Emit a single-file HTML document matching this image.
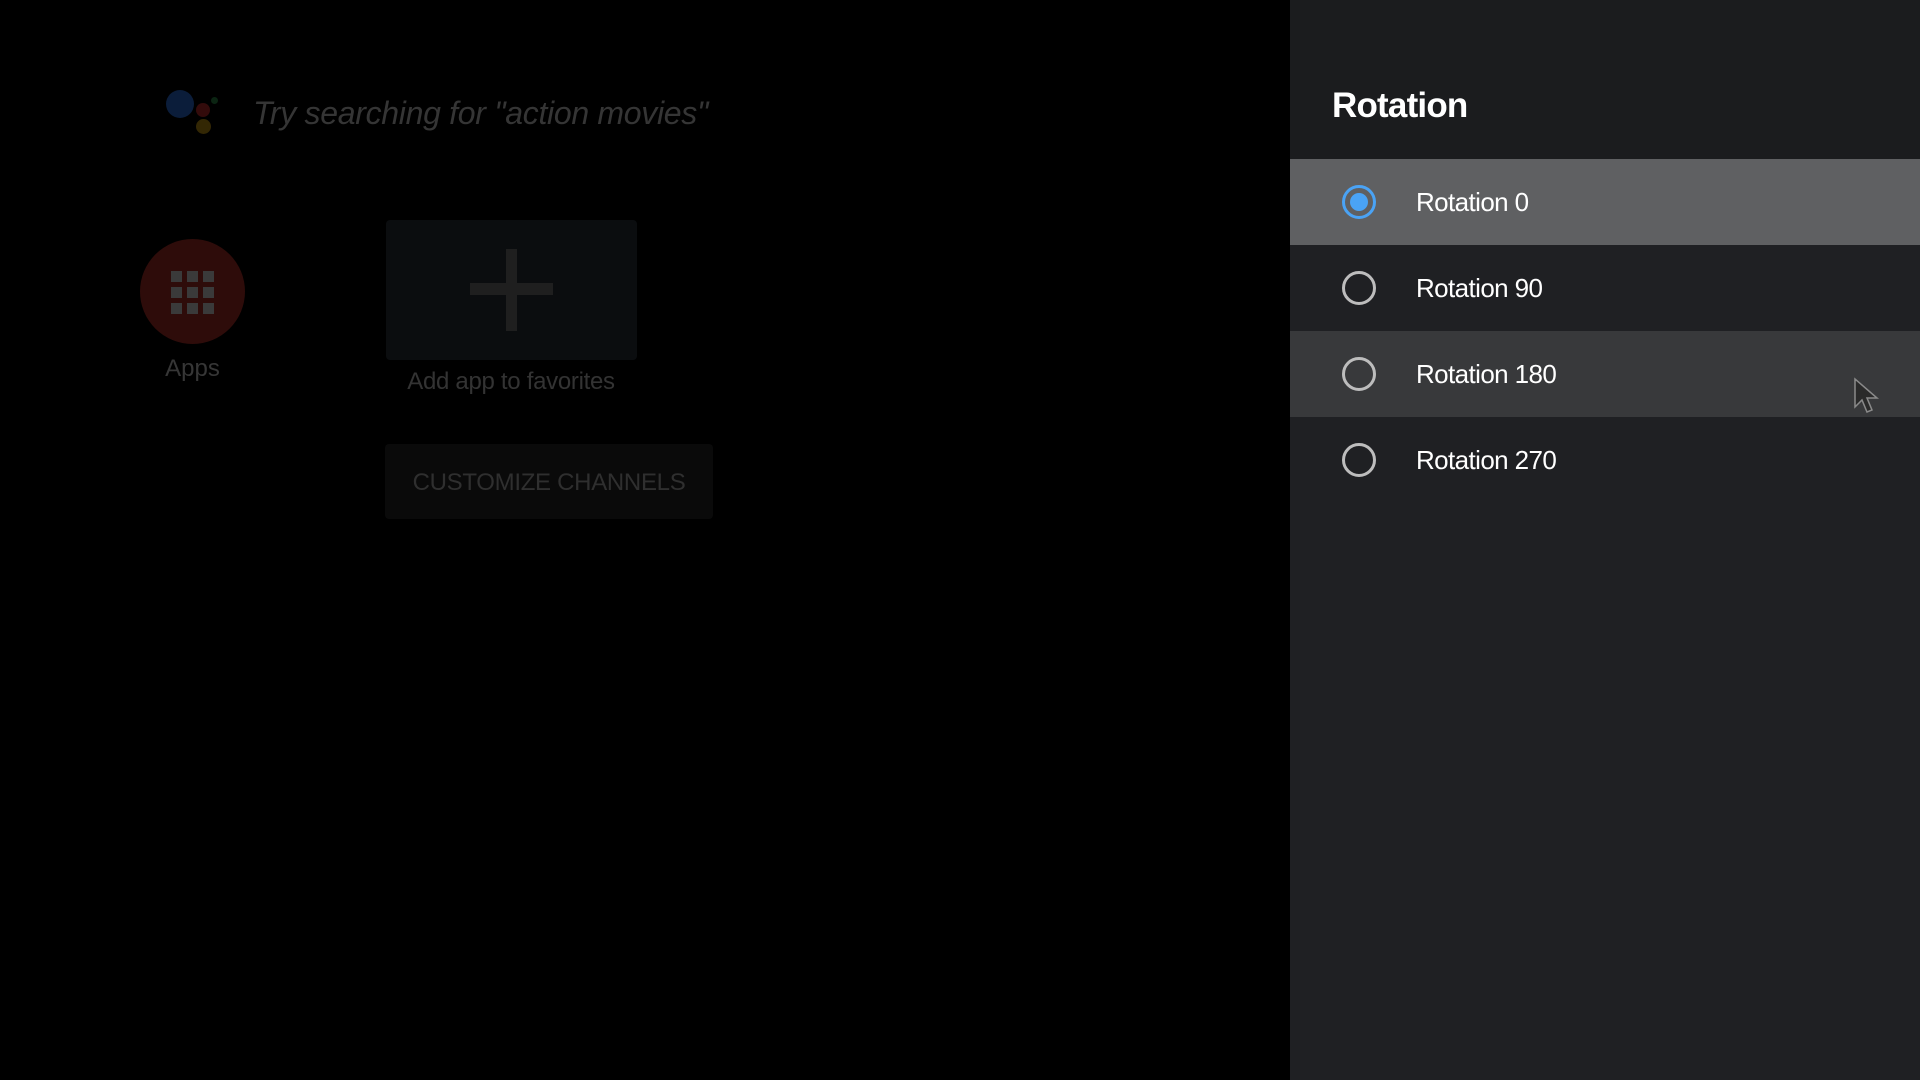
<!DOCTYPE html>
<html><head><meta charset="utf-8"><style>
*{margin:0;padding:0;box-sizing:border-box}
body{width:1920px;height:1080px;background:#000;position:relative;overflow:hidden;font-family:"Liberation Sans",sans-serif}
.a{position:absolute}
.panel{left:1290px;top:0;width:630px;height:1080px;background:#1f2023}
.hdr{left:0;top:0;width:630px;height:159px;background:#1b1c1e}
.title{left:42px;top:86px;color:#fff;font-size:35px;font-weight:bold;letter-spacing:-0.8px}
.row{left:0;width:630px;height:86px}
.rad{left:52px;top:26px;width:34px;height:34px;border-radius:50%;border:3px solid #bdbdbd}
.lbl{left:126px;top:28px;color:#fff;font-size:26px;letter-spacing:-0.6px}
.dot{border-radius:50%}
</style></head><body>
<div class="a dot" style="left:166px;top:90px;width:28px;height:28px;background:#0b1d3a"></div>
<div class="a dot" style="left:196px;top:103px;width:14px;height:14px;background:#330b0b"></div>
<div class="a dot" style="left:211px;top:97px;width:7px;height:7px;background:#0b2412"></div>
<div class="a dot" style="left:196px;top:119px;width:15px;height:15px;background:#332704"></div>
<div class="a" style="left:253px;top:95px;font-size:32px;font-style:italic;color:#353535;letter-spacing:-0.3px">Try searching for "action movies"</div>
<div class="a dot" style="left:140px;top:239px;width:105px;height:105px;background:#2e0c0a"></div>
<svg class="a" style="left:170px;top:270px" width="44" height="44" viewBox="0 0 44 44" fill="#3a3a3a">
<rect x="1" y="1" width="11" height="11"/><rect x="17" y="1" width="11" height="11"/><rect x="33" y="1" width="11" height="11"/>
<rect x="1" y="17" width="11" height="11"/><rect x="17" y="17" width="11" height="11"/><rect x="33" y="17" width="11" height="11"/>
<rect x="1" y="33" width="11" height="11"/><rect x="17" y="33" width="11" height="11"/><rect x="33" y="33" width="11" height="11"/></svg>
<div class="a" style="left:140px;top:355px;width:105px;text-align:center;font-size:24px;color:#363636">Apps</div>
<div class="a" style="left:386px;top:220px;width:251px;height:140px;background:#0b0d0f;border-radius:4px"></div>
<div class="a" style="left:470px;top:283px;width:83px;height:12px;background:#1f1f1f"></div>
<div class="a" style="left:506px;top:249px;width:11px;height:82px;background:#1f1f1f"></div>
<div class="a" style="left:361px;top:368px;width:300px;text-align:center;font-size:24px;color:#333;letter-spacing:-0.3px">Add app to favorites</div>
<div class="a" style="left:385px;top:444px;width:328px;height:75px;background:#0a0a0a;border-radius:4px;color:#2f2f2f;font-size:24px;text-align:center;line-height:77px;letter-spacing:-0.3px">CUSTOMIZE CHANNELS</div>
<div class="a panel">
<div class="a hdr"><div class="a title">Rotation</div></div>
<div class="a row" style="top:159px;background:#5f6062"><div class="a rad" style="border-color:#4aa3f5"><div class="a dot" style="left:5px;top:5px;width:18px;height:18px;background:#4aa3f5"></div></div><div class="a lbl">Rotation 0</div></div>
<div class="a row" style="top:245px"><div class="a rad"></div><div class="a lbl">Rotation 90</div></div>
<div class="a row" style="top:331px;background:#38393b"><div class="a rad"></div><div class="a lbl">Rotation 180</div></div>
<div class="a row" style="top:417px"><div class="a rad"></div><div class="a lbl">Rotation 270</div></div>
</div>
<svg class="a" style="left:1853px;top:377px" width="28" height="40" viewBox="0 0 28 40"><path d="M2 2 L2 30 L9 23 L14 35 L19 33 L14 21 L24 21 Z" fill="#2a2a2a" stroke="#8a8a8a" stroke-width="1.5"/></svg>
</body></html>
